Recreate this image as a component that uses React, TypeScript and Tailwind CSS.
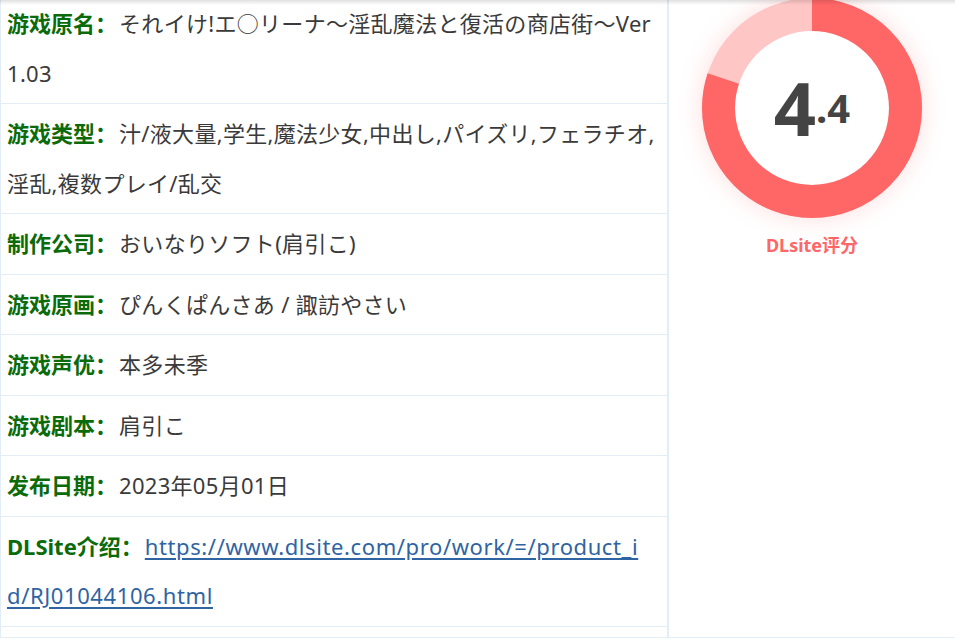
import React from "react";

const rows: { label: string; lines: React.ReactNode[] }[] = [
  { label: "游戏原名", lines: ["それイけ!エ○リーナ～淫乱魔法と復活の商店街～Ver", "1.03"] },
  { label: "游戏类型", lines: ["汁/液大量,学生,魔法少女,中出し,パイズリ,フェラチオ,", "淫乱,複数プレイ/乱交"] },
  { label: "制作公司", lines: ["おいなりソフト(肩引こ)"] },
  { label: "游戏原画", lines: ["ぴんくぱんさあ / 諏訪やさい"] },
  { label: "游戏声优", lines: ["本多未季"] },
  { label: "游戏剧本", lines: ["肩引こ"] },
  { label: "发布日期", lines: ["2023年05月01日"] },
];

function Ring() {
  const r = 93.5;
  const c = 2 * Math.PI * r;
  const red = 0.8;
  return (
    <div className="relative h-[220px] w-[220px] rounded-full shadow-[0_0_24px_rgba(255,102,102,0.22)]">
      <svg width="220" height="220" viewBox="0 0 220 220" className="absolute inset-0">
        <circle cx="110" cy="110" r={r} fill="none" stroke="#ffc6c6" strokeWidth="33" />
        <circle
          cx="110"
          cy="110"
          r={r}
          fill="none"
          stroke="#ff6666"
          strokeWidth="33"
          strokeDasharray={`${c * red} ${c}`}
          transform="rotate(-90 110 110)"
        />
      </svg>
      <div className="absolute inset-0 flex items-center justify-center">
        <div className="flex items-center font-bold text-[#444] font-['Noto_Sans','Liberation_Sans',sans-serif]">
          <span className="text-[74px] leading-none">4</span>
          <span className="text-[40px] leading-none">.4</span>
        </div>
      </div>
    </div>
  );
}

export default function App() {
  return (
    <div className="relative h-[640px] w-[955px] overflow-hidden bg-white font-['Noto_Sans','Noto_Sans_CJK_SC',sans-serif]">
      <div className="pointer-events-none absolute left-0 right-0 top-0 z-10 h-[5px] bg-gradient-to-b from-[rgba(0,0,0,0.12)] to-transparent" />
      <div className="-mt-[6px] flex border-b border-[#e3edf6]">
        <div className="w-[669px] border-l border-r-2 border-[#e3edf6] pb-[10px]">
          {rows.map((row) => (
            <div
              key={row.label}
              className="border-b border-[#e3edf6] pl-[6px] pr-[6px] py-[5px] text-[22px] leading-[49.5px] text-[#3a3a3a] whitespace-nowrap"
            >
              <span className="font-bold text-[#0b6b0b]">{row.label}：</span>
              <span className="ml-[2px] tracking-[0.3px]">
                {row.lines.map((l, i) => (
                  <React.Fragment key={i}>
                    {i > 0 && <br />}
                    {l}
                  </React.Fragment>
                ))}
              </span>
            </div>
          ))}
          <div className="border-b border-[#e3edf6] pl-[6px] pr-[6px] py-[5px] text-[22px] leading-[49.5px] text-[#3a3a3a] whitespace-nowrap">
            <span className="font-bold text-[#0b6b0b]">DLSite介绍：</span>
            <a href="#" className="ml-[2px] tracking-[0.6px] text-[#2f64a3] underline underline-offset-[3px]">
              https://www.dlsite.com/pro/work/=/product_i
              <br />
              d/RJ01044106.html
            </a>
          </div>
        </div>
        <div className="flex flex-1 flex-col items-center pt-[4px]">
          <Ring />
          <div className="mt-[14px] text-[18px] font-bold text-[#ff6666] font-['Noto_Sans','Noto_Sans_CJK_SC',sans-serif]">
            DLsite评分
          </div>
        </div>
      </div>
    </div>
  );
}
